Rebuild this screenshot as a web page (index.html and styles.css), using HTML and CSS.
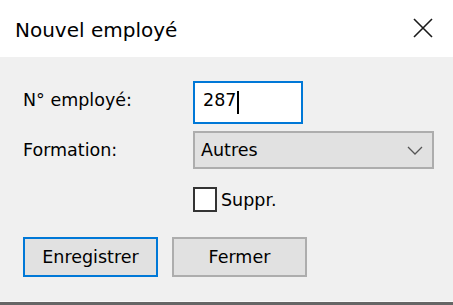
FILE: index.html
```html
<!DOCTYPE html>
<html lang="fr">
<head>
<meta charset="utf-8">
<title>Nouvel employé</title>
<link rel="stylesheet" href="styles.css">
</head>
<body>
<div class="window">
  <div class="titlebar">
    <span class="title">Nouvel employé</span>
    <svg class="close" width="20" height="20" viewBox="0 0 20 20"><path d="M1 1 L19 19 M19 1 L1 19" stroke="#1a1a1a" stroke-width="1.6" fill="none"/></svg>
  </div>
  <div class="body">
    <div class="row row-num">
      <span class="label">N° employé:</span>
      <div class="textbox"><span class="value">287</span><span class="caret"></span></div>
    </div>
    <div class="row row-form">
      <span class="label">Formation:</span>
      <div class="combo"><span class="value">Autres</span>
        <svg class="chev" width="16" height="9" viewBox="0 0 16 9"><path d="M1 1 L8 8 L15 1" stroke="#555" stroke-width="1.3" fill="none"/></svg>
      </div>
    </div>
    <div class="row row-check">
      <span class="label"></span>
      <div class="check"><span class="box"></span><span class="check-label">Suppr.</span></div>
    </div>
    <div class="buttons">
      <div class="btn btn-default">Enregistrer</div>
      <div class="btn">Fermer</div>
    </div>
  </div>
  <div class="edge"></div>
</div>
</body>
</html>
```
FILE: styles.css
```css
* { box-sizing: border-box; }
html, body { margin: 0; padding: 0; }
body {
  width: 453px;
  height: 305px;
  overflow: hidden;
  background: #f0f0f0;
  font-family: "DejaVu Sans", Verdana, sans-serif;
  color: #000;
}
.window { display: flex; flex-direction: column; height: 305px; }
.titlebar {
  height: 57px;
  background: #fff;
  display: flex;
  align-items: center;
  padding: 0 20px 0 15px;
  justify-content: space-between;
}
.title { font-size: 20px; margin-top: 2px; }
.close { margin-top: -2px; }
.body {
  flex: 1;
  padding: 24px 0 0 23px;
  font-size: 17.5px;
}
.row { display: flex; align-items: center; }
.label { width: 170px; flex: none; }
.row-num { height: 43px; }
.row-num .label { padding-bottom: 6px; }
.textbox {
  width: 110px;
  height: 43px;
  border: 2px solid #0078d7;
  background: #fff;
  display: flex;
  align-items: center;
  padding: 0 0 6px 8px;
}
.caret { width: 2px; height: 23px; background: #000; margin: 6px 0 0 1px; }
.row-form { margin-top: 7px; height: 38px; }
.combo {
  width: 241px;
  height: 38px;
  border: 2px solid #adadad;
  background: #e1e1e1;
  display: flex;
  align-items: center;
  justify-content: space-between;
  padding: 0 9px 0 6px;
}
.row-check { margin-top: 18px; height: 25px; }
.check { display: flex; align-items: center; }
.box {
  width: 24px;
  height: 25px;
  border: 2px solid #333;
  background: #fff;
  margin-right: 4px;
}
.buttons { display: flex; gap: 14px; margin-top: 25px; }
.btn {
  width: 135px;
  height: 40px;
  border: 2px solid #adadad;
  background: #e1e1e1;
  display: flex;
  align-items: center;
  justify-content: center;
}
.btn-default { border-color: #0078d7; }
.edge { height: 4px; border-top: 1px solid #f9f9f9; background: #666; }
```
